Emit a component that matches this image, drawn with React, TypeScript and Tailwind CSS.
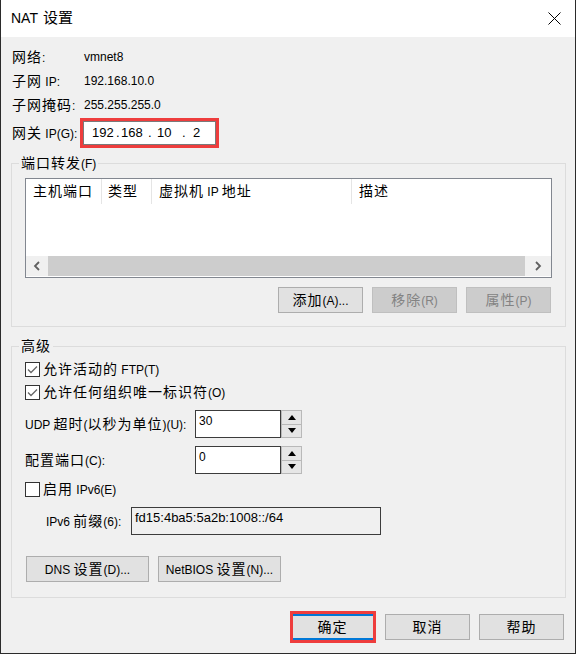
import type { FC } from "react";

// CJK runs are drawn a little larger than the Latin text, as in the Windows dialog font
const CJK = /([\u2e80-\u9fff\uf900-\ufaff\uff00-\uffef]+)/;

const Tx: FC<{ s: string }> = ({ s }) => (
  <span>
    {s
      .split(CJK)
      .filter(Boolean)
      .map((part, i) =>
        CJK.test(part) ? (
          <span key={i} className="text-[14px] tracking-[1px]">
            {part}
          </span>
        ) : (
          <span key={i}>{part}</span>
        )
      )}
  </span>
);

const InfoRow: FC<{ label: string; value: string }> = ({ label, value }) => (
  <div className="flex h-[24px] items-center">
    <div className="w-[72px]">
      <Tx s={label} />
    </div>
    <div>{value}</div>
  </div>
);

const Btn: FC<{ label: string; wide?: boolean; disabled?: boolean }> = ({ label, wide, disabled }) => (
  <button
    type="button"
    className={
      (wide ? "w-[123px] " : "w-[85px] ") +
      (disabled
        ? "flex h-[26px] items-center justify-center border border-[#bfbfbf] bg-[#cccccc] text-[#838383]"
        : "flex h-[26px] items-center justify-center border border-[#adadad] bg-[#e1e1e1] text-black")
    }
  >
    <Tx s={label} />
  </button>
);

const CheckBox: FC<{ checked?: boolean; label: string }> = ({ checked, label }) => (
  <div className="flex h-[23px] items-center">
    <div className="flex h-[15px] w-[15px] items-center justify-center border border-[#333333] bg-white">
      {checked && (
        <svg width="11" height="9" viewBox="0 0 11 9">
          <polyline points="1,4.5 4,7.5 10,1.5" fill="none" stroke="#666666" strokeWidth="1.3" />
        </svg>
      )}
    </div>
    <div className="ml-[3px]">
      <Tx s={label} />
    </div>
  </div>
);

const Spinner: FC = () => (
  <div className="flex h-full w-[21px] flex-col border border-[#b9b9b9] bg-[#f0f0f0]">
    <div className="flex flex-1 items-center justify-center border-b border-[#b9b9b9] bg-[#e6e6e6]">
      <svg width="8" height="5" viewBox="0 0 8 5">
        <polygon points="4,0 8,5 0,5" fill="#000" />
      </svg>
    </div>
    <div className="flex flex-1 items-center justify-center bg-[#e6e6e6]">
      <svg width="8" height="5" viewBox="0 0 8 5">
        <polygon points="0,0 8,0 4,5" fill="#000" />
      </svg>
    </div>
  </div>
);

const NumberRow: FC<{ label: string; value: string }> = ({ label, value }) => (
  <div className="flex h-[28px] items-center">
    <div className="w-[170px]">
      <Tx s={label} />
    </div>
    <div className="flex h-full">
      <div className="h-full w-[86px] border border-[#3c3c3c] bg-white pl-[3px] pt-[3px] leading-[14px]">
        {value}
      </div>
      <Spinner />
    </div>
  </div>
);

const Chevron: FC<{ right?: boolean }> = ({ right }) => (
  <svg width="8" height="10" viewBox="0 0 8 10">
    <polyline
      points={right ? "2,1 6,5 2,9" : "6,1 2,5 6,9"}
      fill="none"
      stroke="#606060"
      strokeWidth="1.8"
    />
  </svg>
);

export default function App() {
  return (
    <div className="flex h-[654px] w-[576px] flex-col border-x border-b border-[#2b2b2b] bg-[#f0f0f0] text-[12px] text-black [font-family:'Liberation_Sans','Noto_Sans_CJK_SC',sans-serif]">
      {/* title bar */}
      <div className="flex h-[37px] items-center justify-between bg-white pl-[10px] pr-[14px]">
        <div className="flex items-baseline">
          <span className="text-[14px]">NAT</span>
          <span className="ml-[5px] text-[15px]">设置</span>
        </div>
        <svg width="13" height="13" viewBox="0 0 13 13">
          <path d="M0.5 0.5 L12.5 12.5 M12.5 0.5 L0.5 12.5" stroke="#000" strokeWidth="1" />
        </svg>
      </div>

      {/* network info */}
      <div className="ml-[11px] mt-[8px] flex flex-col">
        <InfoRow label="网络:" value="vmnet8" />
        <InfoRow label="子网 IP:" value="192.168.10.0" />
        <InfoRow label="子网掩码:" value="255.255.255.0" />
        <div className="mt-[1px] flex h-[30px] items-center">
          <div className="w-[68px]">
            <Tx s="网关 IP(G):" />
          </div>
          <div className="h-[30px] w-[139px] border-[3px] border-[#ee3d3d]">
            <div className="flex h-full items-center border border-[#7a7a7a] bg-white pl-[8px] text-[13px]">
              <span className="w-[24px]">192</span>
              <span className="w-[5px]">.</span>
              <span className="w-[27px]">168</span>
              <span className="w-[9px]">.</span>
              <span className="w-[25px]">10</span>
              <span className="w-[11px]">.</span>
              <span>2</span>
            </div>
          </div>
        </div>
      </div>

      {/* port forwarding */}
      <fieldset className="ml-[10px] mt-[6px] w-[555px] border border-[#dcdcdc]">
        <legend className="ml-[7px] h-[18px] px-[2px] leading-[18px]">
          <Tx s="端口转发(F)" />
        </legend>
        <div className="px-[13px] pb-[13px] pt-[6px]">
          <div className="flex h-[100px] flex-col border border-[#828790] bg-white">
            <div className="flex h-[25px] items-center">
              <div className="flex h-full w-[76px] items-center border-r border-[#e5e5e5] pl-[7px]">
                <Tx s="主机端口" />
              </div>
              <div className="flex h-full w-[50px] items-center border-r border-[#e5e5e5] pl-[6px]">
                <Tx s="类型" />
              </div>
              <div className="flex h-full w-[200px] items-center border-r border-[#e5e5e5] pl-[7px]">
                <Tx s="虚拟机 IP 地址" />
              </div>
              <div className="flex h-full flex-1 items-center pl-[7px]">
                <Tx s="描述" />
              </div>
            </div>
            <div className="mb-[1px] mt-auto flex h-[20px] bg-[#f0f0f0]">
              <div className="flex w-[22px] items-center justify-center">
                <Chevron />
              </div>
              <div className="flex-1 bg-[#cdcdcd]" />
              <div className="flex w-[26px] items-center justify-center">
                <Chevron right />
              </div>
            </div>
          </div>
          <div className="mt-[9px] flex justify-end gap-[9px] pr-[1px]">
            <Btn label="添加(A)..." />
            <Btn label="移除(R)" disabled />
            <Btn label="属性(P)" disabled />
          </div>
        </div>
      </fieldset>

      {/* advanced */}
      <fieldset className="ml-[10px] mt-[10px] w-[555px] border border-[#dcdcdc]">
        <legend className="ml-[7px] h-[18px] px-[2px] leading-[18px]">
          <Tx s="高级" />
        </legend>
        <div className="flex flex-col px-[13px] pb-[15px] pt-[3px]">
          <CheckBox checked label="允许活动的 FTP(T)" />
          <CheckBox checked label="允许任何组织唯一标识符(O)" />
          <div className="mt-[6px]">
            <NumberRow label="UDP 超时(以秒为单位)(U):" value="30" />
          </div>
          <div className="mt-[8px]">
            <NumberRow label="配置端口(C):" value="0" />
          </div>
          <div className="mt-[4px]">
            <CheckBox label="启用 IPv6(E)" />
          </div>
          <div className="ml-[21px] mt-[6px] flex h-[28px] items-center">
            <div className="w-[85px]">
              <Tx s="IPv6 前缀(6):" />
            </div>
            <div className="h-full w-[250px] border border-[#3c3c3c] bg-[#f0f0f0] pl-[3px] pt-[2px] text-[13px] leading-[15px]">
              fd15:4ba5:5a2b:1008::/64
            </div>
          </div>
          <div className="ml-[1px] mt-[21px] flex gap-[9px]">
            <Btn label="DNS 设置(D)..." wide />
            <Btn label="NetBIOS 设置(N)..." wide />
          </div>
        </div>
      </fieldset>

      {/* dialog buttons */}
      <div className="mt-[16px] flex justify-end gap-[9px] pr-[11px]">
        <div className="relative mr-[1px]">
          <button
            type="button"
            className="flex h-[26px] w-[85px] items-center justify-center border-2 border-[#0078d7] bg-[#e1e1e1]"
          >
            <Tx s="确定" />
          </button>
          <span className="pointer-events-none absolute -bottom-[3px] -right-[1px] -top-[3px] left-0 border-[3px] border-[#ee3d3d]" />
        </div>
        <Btn label="取消" />
        <Btn label="帮助" />
      </div>
    </div>
  );
}
